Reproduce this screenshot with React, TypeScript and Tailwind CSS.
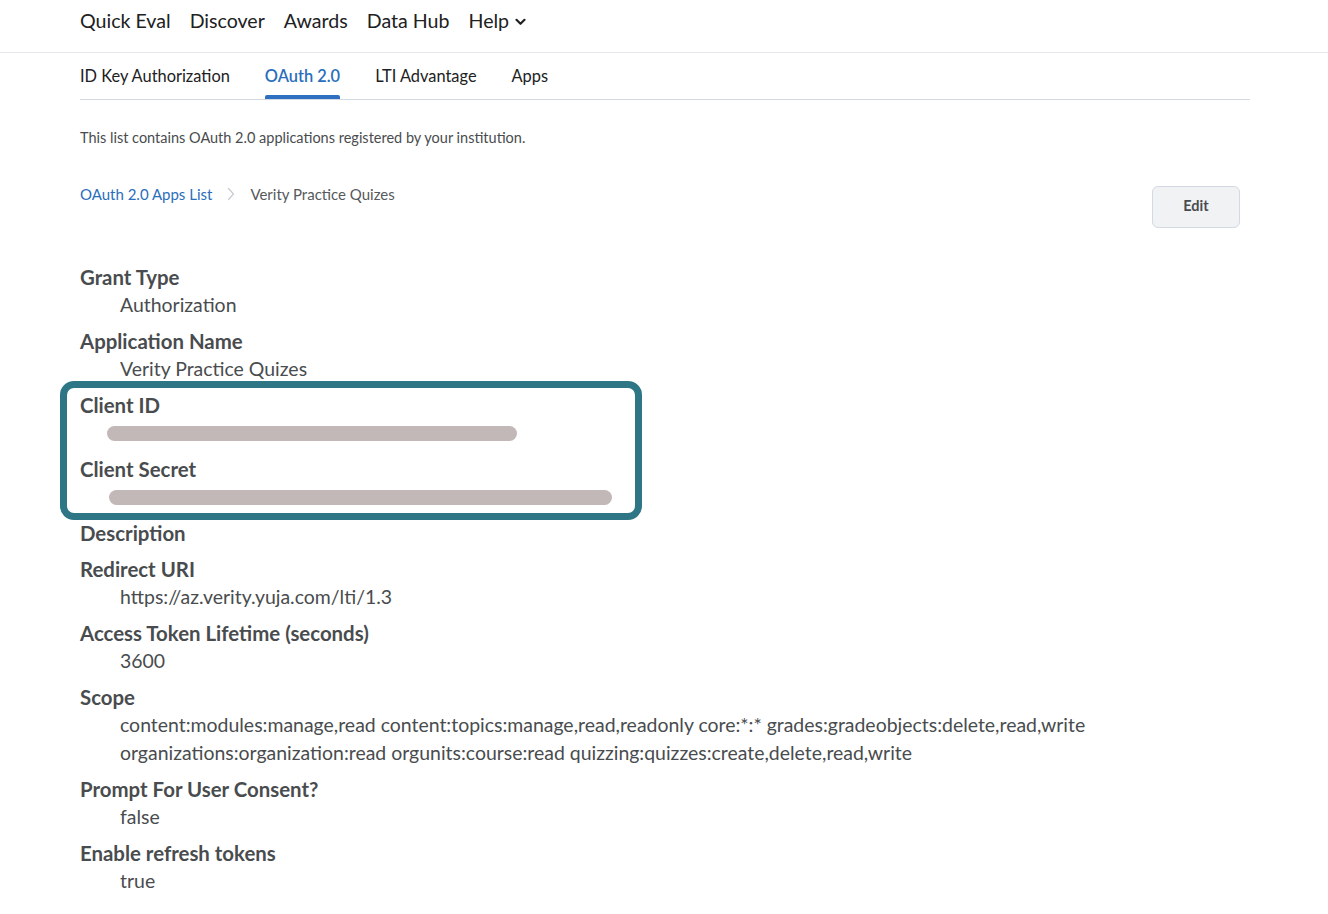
import React from 'react';

const font = { fontFamily: 'Lato, "Open Sans", Arial, sans-serif' };

const topNav = ['Quick Eval', 'Discover', 'Awards', 'Data Hub'];
const tabs = ['ID Key Authorization', 'OAuth 2.0', 'LTI Advantage', 'Apps'];

function Field({ label, children }: { label: string; children?: React.ReactNode }) {
  return (
    <div className="mb-2">
      <div className="text-[20.4px] leading-[28px] font-bold text-[#494c4e]">{label}</div>
      {children && <div className="pl-10 text-[19.45px] leading-[28px] text-[#494c4e]">{children}</div>}
    </div>
  );
}

function Redacted({ width, offset }: { width: number; offset: number }) {
  return (
    <div className="h-[28px] flex items-center">
      <div className="h-[15px] rounded-full bg-[#c1b8b7]" style={{ width, marginLeft: offset }} />
    </div>
  );
}

export default function App() {
  return (
    <div className="min-h-screen bg-white" style={font}>
      <header className="h-[53px] border-b border-[#e6e8eb] pt-[9px]">
        <nav className="flex items-center gap-[19px] px-20">
          {topNav.map((item) => (
            <span key={item} className="text-[19.6px] leading-[24px] text-[#202122]">
              {item}
            </span>
          ))}
          <span className="flex items-center gap-[6px] text-[19.6px] leading-[24px] text-[#202122]">
            Help
            <svg width="11" height="8" viewBox="0 0 11 8" fill="none" className="mt-[2px]">
              <path d="M1.5 1.8l4 4 4-4" stroke="#202122" strokeWidth="2.2" strokeLinecap="round" strokeLinejoin="round" />
            </svg>
          </span>
        </nav>
      </header>

      <main className="pl-20 w-[1250px]">
        <div className="flex gap-[35px] border-b border-[#d3d9e3]">
          {tabs.map((tab) => {
            const active = tab === 'OAuth 2.0';
            return (
              <div key={tab} className="relative pt-[11px] pb-[11px]">
                <span
                  className={`text-[16.4px] leading-[24px] ${
                    active ? 'text-[#2a6ebb] font-semibold' : 'text-[#202122]'
                  }`}
                >
                  {tab}
                </span>
                {active && <div className="absolute left-0 right-0 bottom-0 h-[4px] rounded-t-[2px] bg-[#2f6fc2]" />}
              </div>
            );
          })}
        </div>

        <p className="mt-[28px] text-[14.5px] leading-[20px] text-[#494c4e]">
          This list contains OAuth 2.0 applications registered by your institution.
        </p>

        <div className="mt-[37px] flex items-start justify-between pr-[10px]">
          <div className="flex items-center text-[15px] leading-[20px] -mt-px">
            <span className="text-[#2a6ebb]">OAuth 2.0 Apps List</span>
            <svg className="mx-[15px]" width="8" height="14" viewBox="0 0 8 14" fill="none">
              <path d="M1.5 1.5l5 5.5-5 5.5" stroke="#c6cbd2" strokeWidth="1.2" strokeLinecap="round" strokeLinejoin="round" />
            </svg>
            <span className="text-[#565a5c]">Verity Practice Quizes</span>
          </div>
          <button className="mt-px h-[42px] w-[88px] rounded-[6px] border border-[#d3d9e3] bg-[#f1f2f4] pb-px text-[14.5px] leading-none font-bold text-[#494c4e]">
            Edit
          </button>
        </div>

        <div className="mt-[35px]">
          <Field label="Grant Type">Authorization</Field>
          <Field label="Application Name">Verity Practice Quizes</Field>

          <div className="relative">
            <div className="absolute -left-[20px] -top-[10px] h-[139px] w-[582px] rounded-[14px] border-[7px] border-[#2e7686]" />
            <div className="mb-2">
              <div className="text-[20.4px] leading-[28px] font-bold text-[#494c4e]">Client ID</div>
              <Redacted width={410} offset={27} />
            </div>
            <div className="mb-2">
              <div className="text-[20.4px] leading-[28px] font-bold text-[#494c4e]">Client Secret</div>
              <Redacted width={503} offset={29} />
            </div>
          </div>

          <Field label="Description" />
          <Field label="Redirect URI">https://az.verity.yuja.com/lti/1.3</Field>
          <Field label="Access Token Lifetime (seconds)">3600</Field>
          <Field label="Scope">
            content:modules:manage,read content:topics:manage,read,readonly core:*:* grades:gradeobjects:delete,read,write
            organizations:organization:read orgunits:course:read quizzing:quizzes:create,delete,read,write
          </Field>
          <Field label="Prompt For User Consent?">false</Field>
          <Field label="Enable refresh tokens">true</Field>
        </div>
      </main>
    </div>
  );
}
